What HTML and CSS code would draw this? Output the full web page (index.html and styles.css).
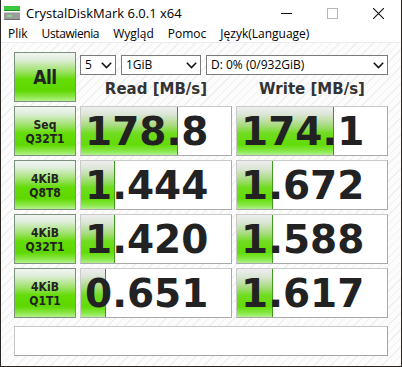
FILE: index.html
```html
<!DOCTYPE html>
<html>
<head>
<meta charset="utf-8">
<link rel="stylesheet" href="styles.css">
</head>
<body>
<div class="window">
  <div class="titlebar">
    <svg class="app-icon" width="16" height="16" viewBox="0 0 16 16">
      <rect x="0" y="0" width="16" height="4" fill="#3cc83c"/>
      <rect x="0" y="4" width="16" height="1" fill="#1f8f2a"/>
      <rect x="0" y="6" width="16" height="8" fill="#9c9c9c"/>
      <rect x="0" y="6" width="16" height="1" fill="#c8c8c8"/>
      <rect x="0" y="13" width="16" height="1" fill="#6e6e6e"/>
      <rect x="3" y="9" width="5" height="2" fill="#7fe07f"/>
    </svg>
    <span class="title">CrystalDiskMark 6.0.1 x64</span>
    <div class="controls">
      <div class="ctl"><svg width="11" height="11" viewBox="0 0 11 11"><line x1="0" y1="5.5" x2="11" y2="5.5" stroke="#111" stroke-width="1"/></svg></div>
      <div class="ctl"><svg width="11" height="11" viewBox="0 0 11 11"><rect x="0.5" y="0.5" width="10" height="10" fill="none" stroke="#b8b8b8" stroke-width="1"/></svg></div>
      <div class="ctl"><svg width="11" height="11" viewBox="0 0 11 11"><path d="M0 0 L11 11 M11 0 L0 11" stroke="#111" stroke-width="1.1"/></svg></div>
    </div>
  </div>
  <div class="menubar">
    <span class="menu-item">Plik</span>
    <span class="menu-item">Ustawienia</span>
    <span class="menu-item">Wygląd</span>
    <span class="menu-item">Pomoc</span>
    <span class="menu-item">Język(Language)</span>
  </div>
  <div class="client">
    <div class="grid">
      <div class="btn btn-all">All</div>
      <div class="topcell">
        <div class="selects">
          <div class="select sel-count"><span>5</span><svg class="chev" width="11" height="7" viewBox="0 0 11 7"><path d="M0.8 0.8 L5.5 5.6 L10.2 0.8" fill="none" stroke="#111" stroke-width="1.5"/></svg></div>
          <div class="select sel-size"><span>1GiB</span><svg class="chev" width="11" height="7" viewBox="0 0 11 7"><path d="M0.8 0.8 L5.5 5.6 L10.2 0.8" fill="none" stroke="#111" stroke-width="1.5"/></svg></div>
          <div class="select sel-drive"><span>D: 0% (0/932GiB)</span><svg class="chev" width="11" height="7" viewBox="0 0 11 7"><path d="M0.8 0.8 L5.5 5.6 L10.2 0.8" fill="none" stroke="#111" stroke-width="1.5"/></svg></div>
        </div>
        <div class="heads">
          <div class="head">Read [MB/s]</div>
          <div class="head">Write [MB/s]</div>
        </div>
      </div>

      <div class="btn btn-label">Seq<br>Q32T1</div>
      <div class="result"><div class="bar" style="width:97px"></div><span class="val">178.8</span></div>
      <div class="result"><div class="bar" style="width:97px"></div><span class="val">174.1</span></div>

      <div class="btn btn-label">4KiB<br>Q8T8</div>
      <div class="result"><div class="bar" style="width:34px"></div><span class="val">1.444</span></div>
      <div class="result"><div class="bar" style="width:36px"></div><span class="val">1.672</span></div>

      <div class="btn btn-label">4KiB<br>Q32T1</div>
      <div class="result"><div class="bar" style="width:34px"></div><span class="val">1.420</span></div>
      <div class="result"><div class="bar" style="width:36px"></div><span class="val">1.588</span></div>

      <div class="btn btn-label">4KiB<br>Q1T1</div>
      <div class="result"><div class="bar" style="width:25px"></div><span class="val">0.651</span></div>
      <div class="result"><div class="bar" style="width:36px"></div><span class="val">1.617</span></div>

      <div class="comment"></div>
    </div>
  </div>
</div>
</body>
</html>
```
FILE: styles.css
```css
* { box-sizing: border-box; }
html, body { margin: 0; padding: 0; background: #fff; }

.window {
  width: 402px;
  height: 367px;
  border-left: 1px solid #2a2624;
  border-right: 1px solid #2a2624;
  border-bottom: 1px solid #2a2624;
  display: flex;
  flex-direction: column;
  background: #fff;
  font-family: "Open Sans", "Noto Sans", sans-serif;
  color: #000;
  overflow: hidden;
}

.titlebar {
  height: 27px;
  display: flex;
  align-items: center;
  background: #fff;
}
.app-icon { margin-left: 3px; margin-top: 1px; flex: none; }
.title {
  margin-left: 6px;
  font-size: 13px;
  color: #000;
  line-height: 1;
}
.controls {
  margin-left: auto;
  display: flex;
  height: 27px;
}
.ctl {
  width: 46px;
  height: 27px;
  display: flex;
  align-items: center;
  justify-content: center;
}

.menubar {
  height: 18px;
  display: flex;
  align-items: center;
  border-bottom: 1px solid #ececec;
  background: #fff;
}
.menu-item {
  font-size: 12px;
  padding: 0 7px;
  line-height: 17px;
  margin-top: -2px;
}
.menu-item:nth-child(2) { letter-spacing: -0.4px; }

.client {
  flex: 1;
  padding: 9px 0 0 13px;
  background-color: #fcfcfc;
  background-image: repeating-linear-gradient(135deg, #fcfcfc 0px, #fcfcfc 5px, #efefef 5px, #efefef 6px);
}

.grid {
  display: grid;
  grid-template-columns: 62px 152px 152px;
  grid-auto-rows: 50px;
  column-gap: 4px;
  row-gap: 4px;
}

.btn {
  border: 1px solid #7d907d;
  background: linear-gradient(to bottom, #f2f5f2 0%, #dfeedb 14%, #9ee26a 38%, #64dc08 55%, #5ed800 78%, #8ee84c 92%, #b4f290 100%);
  display: flex;
  align-items: center;
  justify-content: center;
  text-align: center;
  color: #222;
  font-weight: bold;
  font-family: "DejaVu Sans Condensed", "DejaVu Sans", sans-serif;
}
.btn-all { font-size: 19px; letter-spacing: -0.5px; }
.btn-label { font-size: 12px; line-height: 14px; padding-top: 1px; }

.topcell {
  grid-column: 2 / 4;
  display: flex;
  flex-direction: column;
}
.selects {
  display: flex;
  gap: 5px;
  margin-top: 3px;
  height: 20px;
}
.select {
  height: 20px;
  border: 1px solid #7a7a7a;
  background: #fff;
  display: flex;
  align-items: center;
  padding: 0 3px 0 4px;
  font-size: 12px;
  color: #000;
}
.select span { flex: 1; line-height: 1; margin-top: -1px; }
.chev { flex: none; }
.sel-count { width: 36px; }
.sel-size { width: 80px; }
.sel-drive { width: 182px; }

.heads {
  display: grid;
  grid-template-columns: 152px 152px;
  column-gap: 4px;
  flex: 1;
  align-items: center;
}
.head {
  text-align: center;
  font-family: "DejaVu Sans", sans-serif;
  font-weight: bold;
  font-size: 15px;
  color: #333;
}

.result {
  position: relative;
  border: 1px solid;
  border-color: #cacaca #a9a9a9 #a9a9a9 #cacaca;
  background: #fff;
  display: flex;
  align-items: center;
  overflow: hidden;
}
.bar {
  position: absolute;
  left: 0; top: 0; bottom: 0;
  border-right: 1px solid #3f9a1c;
  background: linear-gradient(to bottom, #eeeeee 0%, #dde6d8 15%, #a8dc80 38%, #70dc20 55%, #62dc08 78%, #88e848 92%, #b2f090 100%);
}
.val {
  position: relative;
  font-family: "DejaVu Sans", sans-serif;
  font-weight: bold;
  font-size: 39px;
  line-height: 1;
  color: #222;
  padding-left: 4px;
  margin-top: 1px;
}

.comment {
  grid-column: 1 / 4;
  height: 30px;
  margin-top: 4px;
  border: 1px solid;
  border-color: #c6c6c6 #a4a4a4 #a4a4a4 #c6c6c6;
  background: #fff;
}
```
